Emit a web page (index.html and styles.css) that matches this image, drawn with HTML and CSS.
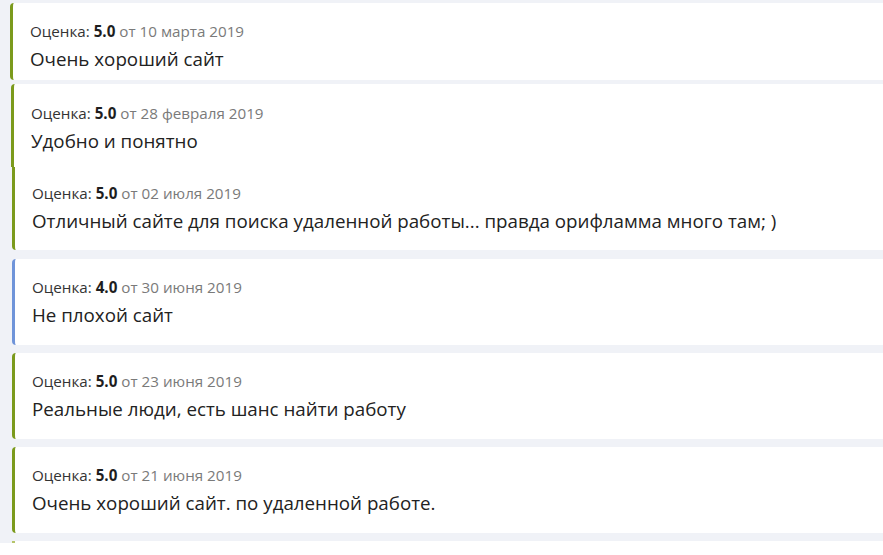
FILE: index.html
```html
<!DOCTYPE html>
<html lang="ru">
<head>
<meta charset="utf-8">
<title>Отзывы</title>
<link rel="stylesheet" href="styles.css">
</head>
<body>
<div class="reviews">
  <div class="review review--first">
    <div class="review-meta">Оценка: <b>5.0</b> <span class="review-date">от 10 марта 2019</span></div>
    <div class="review-text">Очень хороший сайт</div>
  </div>
  <div class="review review--second">
    <div class="review-meta">Оценка: <b>5.0</b> <span class="review-date">от 28 февраля 2019</span></div>
    <div class="review-text">Удобно и понятно</div>
  </div>
  <div class="review review--third">
    <div class="review-meta">Оценка: <b>5.0</b> <span class="review-date">от 02 июля 2019</span></div>
    <div class="review-text">Отличный сайте для поиска удаленной работы... правда орифламма много там; )</div>
  </div>
  <div class="review review--four">
    <div class="review-meta">Оценка: <b>4.0</b> <span class="review-date">от 30 июня 2019</span></div>
    <div class="review-text">Не плохой сайт</div>
  </div>
  <div class="review">
    <div class="review-meta">Оценка: <b>5.0</b> <span class="review-date">от 23 июня 2019</span></div>
    <div class="review-text">Реальные люди, есть шанс найти работу</div>
  </div>
  <div class="review">
    <div class="review-meta">Оценка: <b>5.0</b> <span class="review-date">от 21 июня 2019</span></div>
    <div class="review-text">Очень хороший сайт. по удаленной работе.</div>
  </div>
  <div class="review review--cut"></div>
</div>
<div class="page-end"></div>
</body>
</html>
```

FILE: styles.css
```css
html, body {
  margin: 0;
  padding: 0;
}

body {
  background: #f0f2f7;
  font-family: "Open Sans", "Noto Sans", sans-serif;
  color: #222;
  height: 555px;
  overflow: hidden;
}

.reviews {
  display: flex;
  flex-direction: column;
  gap: 8px;
  padding-top: 3px;
}

.review {
  background: #fff;
  border-left: 3px solid #7b9a1c;
  border-radius: 4px 0 0 4px;
  margin-left: 12px;
  height: 86px;
  box-sizing: border-box;
  padding: 18px 0 0 17px;
}

.review--first {
  margin-left: 10px;
  height: 77px;
  margin-bottom: -4px;
}

.review--second {
  margin-left: 11px;
  height: 83px;
  border-radius: 4px 0 0 0;
  padding-top: 19px;
  margin-bottom: -8px;
}

.review--third {
  height: 83px;
  border-radius: 0 0 0 4px;
  padding-top: 16px;
  margin-bottom: 1px;
}

.review--four {
  border-left-color: #6f94d9;
}

.review--cut {
  height: 2px;
  padding: 0;
  border-left-color: #b5c46a;
  border-radius: 0;
}

.review-meta {
  font-size: 15.2px;
  line-height: 20px;
  color: #333;
}

.review-meta b {
  font-weight: 700;
  color: #1e1e1e;
}

.review-date {
  color: #7a7a7a;
}

.review-text {
  font-size: 18.75px;
  line-height: 26px;
  margin-top: 5px;
  color: #222;
}

.page-end {
  background: #fff;
  height: 12px;
}
```
